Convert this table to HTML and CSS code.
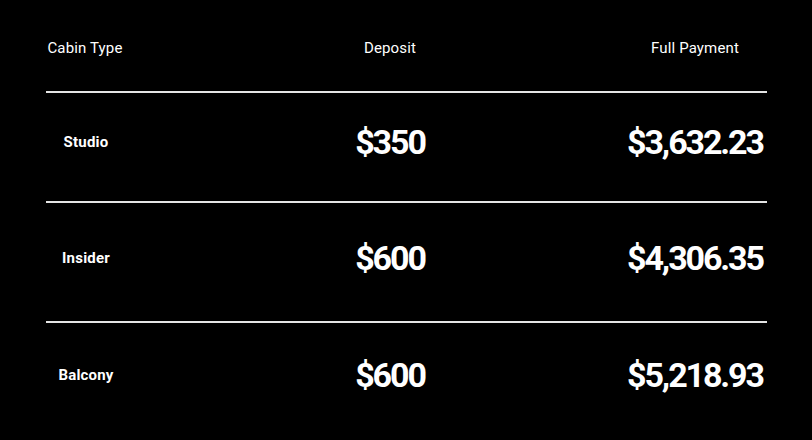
FILE: index.html
```html
<!DOCTYPE html>
<html lang="en">
<head>
<meta charset="utf-8">
<title>Cabin Prices</title>
<link rel="stylesheet" href="styles.css">
</head>
<body>
<div class="table">
  <div class="row head">
    <div class="cell">Cabin Type</div>
    <div class="cell">Deposit</div>
    <div class="cell">Full Payment</div>
  </div>
  <div class="rule"></div>
  <div class="row body r1">
    <div class="cell label">Studio</div>
    <div class="cell price">$350</div>
    <div class="cell price">$3,632.23</div>
  </div>
  <div class="rule"></div>
  <div class="row body r2">
    <div class="cell label">Insider</div>
    <div class="cell price">$600</div>
    <div class="cell price">$4,306.35</div>
  </div>
  <div class="rule"></div>
  <div class="row body r3">
    <div class="cell label">Balcony</div>
    <div class="cell price">$600</div>
    <div class="cell price">$5,218.93</div>
  </div>
</div>
</body>
</html>
```
FILE: styles.css
```css
html, body {
  margin: 0;
  padding: 0;
  background: #000;
  color: #fff;
  font-family: Roboto, "Liberation Sans", sans-serif;
}
body {
  height: 440px;
  overflow: hidden;
}
.table {
  width: 780px;
  display: flex;
  flex-direction: column;
}
.row {
  display: grid;
  grid-template-columns: 170px 440px 170px;
  justify-items: center;
  box-sizing: border-box;
}
.cell {
  white-space: nowrap;
}
.head {
  height: 91px;
  padding-top: 39px;
  align-items: start;
  font-size: 15px;
  line-height: 18px;
  letter-spacing: 0.15px;
}
.rule {
  height: 2px;
  margin: 0 13px 0 46px;
  background: #e4e4e4;
}
.body {
  align-items: center;
  padding-bottom: 10px;
}
.r1 { height: 108px; }
.r2 { height: 118px; padding-bottom: 8px; }
.r3 { height: 113px; }
.label {
  font-size: 15px;
  font-weight: 700;
  line-height: 18px;
  letter-spacing: 0.2px;
  padding-left: 2px;
}
.price {
  font-size: 34px;
  font-weight: 700;
  letter-spacing: -2.1px;
  line-height: 40px;
}
```
